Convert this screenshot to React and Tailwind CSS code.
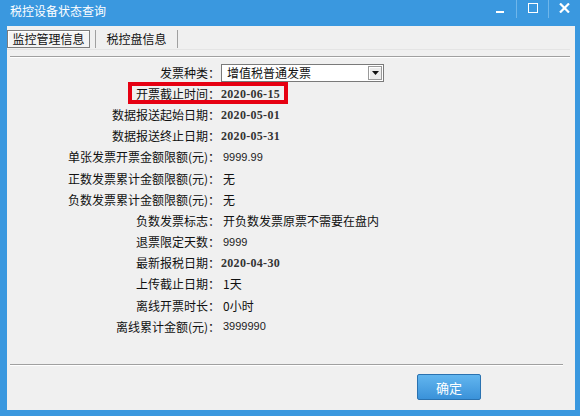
import React from "react";

const cjk = { fontFamily: '"Noto Sans CJK SC", "Noto Sans", sans-serif' };
const dateFont = { fontFamily: '"Liberation Serif", serif' };
const numFont = { fontFamily: '"Liberation Sans", Arial, sans-serif' };

function Row({ label, children, boxed }) {
  return (
    <div className="relative flex h-[21.2px] items-center">
      <div className="w-[213px] shrink-0 text-right text-[12px] leading-none text-[#111]" style={cjk}>
        {label}
      </div>
      <div className="flex items-center pl-[1px]">{children}</div>
      {boxed && (
        <div className="pointer-events-none absolute left-[121px] top-[-1px] h-[22px] w-[160px] border-[4px] border-[#e60012]" />
      )}
    </div>
  );
}

const DateVal = ({ v }) => (
  <span className="text-[12px] font-bold leading-none tracking-[0.3px] text-[#333]" style={dateFont}>
    {v}
  </span>
);
const NumVal = ({ v }) => (
  <span className="pl-[2px] text-[11px] leading-none text-[#222]" style={numFont}>
    {v}
  </span>
);
const CjkVal = ({ v }) => (
  <span className="pl-[2px] text-[12px] leading-none text-[#111]" style={cjk}>
    {v}
  </span>
);

export default function App() {
  return (
    <div className="flex h-[416px] w-[580px] flex-col overflow-hidden bg-[#3a98df]">
      {/* title bar */}
      <div className="relative flex h-[26px] shrink-0 items-start">
        <div className="pl-[10px] pt-[5px] text-[12px] leading-none text-white" style={cjk}>
          税控设备状态查询
        </div>
        <div className="ml-auto flex h-[18px] items-start">
          <div className="flex h-[18px] w-[33px] items-center justify-center">
            <div className="mt-[6px] h-[2px] w-[8px] bg-white" />
          </div>
          <div className="h-[18px] w-px bg-[#6fb6ea]" />
          <div className="flex h-[18px] w-[31px] items-start justify-center pt-[3px]">
            <div className="h-[10px] w-[10px] border-[1.5px] border-white" />
          </div>
          <div className="h-[18px] w-px bg-[#6fb6ea]" />
          <div className="flex h-[18px] w-[31px] items-start justify-center pt-[3px]">
            <svg width="11" height="10" viewBox="0 0 11 10">
              <path d="M1 0.5 L10 9.5 M10 0.5 L1 9.5" stroke="white" strokeWidth="2.2" />
            </svg>
          </div>
        </div>
      </div>

      {/* client area */}
      <div className="mb-[6px] ml-[7px] mr-[5px] flex flex-1 flex-col bg-[#f0f0f0]">
        {/* tabs */}
        <div className="mt-[4px] flex h-[18px] items-stretch">
          <div
            className="flex w-[83px] items-center justify-center border border-[#7d7d7d] bg-[#f4f4f4] text-[12px] leading-none text-[#111] shadow-[inset_1px_1px_0_#ffffff]"
            style={cjk}
          >
            监控管理信息
          </div>
          <div className="ml-[5px] w-px bg-[#a0a0a0]" />
          <div className="flex w-[81px] items-center justify-center text-[12px] leading-none text-[#111]" style={cjk}>
            税控盘信息
          </div>
          <div className="w-px bg-[#a0a0a0]" />
        </div>
        <div className="mt-px h-px w-[563px] bg-[#e4e4e4]" />

        {/* top etched line */}
        <div className="ml-[3px] mt-[6px] h-px w-[560px] bg-[#a0a0a0] shadow-[0_1px_0_#ffffff]" />

        {/* rows */}
        <div className="mt-[5px] flex flex-col">
          <Row label="发票种类：">
            <div className="flex h-[18px] w-[163px] items-center border border-[#7a7a7a] bg-white">
              <span className="pl-[5px] text-[12px] leading-none text-[#111]" style={cjk}>
                增值税普通发票
              </span>
              <div className="ml-auto mr-px flex h-[14px] w-[14px] items-center justify-center border border-[#9a9a9a] bg-[#ececec] shadow-[inset_1px_1px_0_#ffffff]">
                <svg width="7" height="4" viewBox="0 0 7 4">
                  <path d="M0 0 L7 0 L3.5 4 Z" fill="#111" />
                </svg>
              </div>
            </div>
          </Row>
          <Row label="开票截止时间：" boxed>
            <DateVal v="2020-06-15" />
          </Row>
          <Row label="数据报送起始日期：">
            <DateVal v="2020-05-01" />
          </Row>
          <Row label="数据报送终止日期：">
            <DateVal v="2020-05-31" />
          </Row>
          <Row label="单张发票开票金额限额(元)：">
            <NumVal v="9999.99" />
          </Row>
          <Row label="正数发票累计金额限额(元)：">
            <CjkVal v="无" />
          </Row>
          <Row label="负数发票累计金额限额(元)：">
            <CjkVal v="无" />
          </Row>
          <Row label="负数发票标志：">
            <CjkVal v="开负数发票原票不需要在盘内" />
          </Row>
          <Row label="退票限定天数：">
            <NumVal v="9999" />
          </Row>
          <Row label="最新报税日期：">
            <DateVal v="2020-04-30" />
          </Row>
          <Row label="上传截止日期：">
            <CjkVal v="1天" />
          </Row>
          <Row label="离线开票时长：">
            <CjkVal v="0小时" />
          </Row>
          <Row label="离线累计金额(元)：">
            <NumVal v="3999990" />
          </Row>
        </div>

        {/* bottom etched line */}
        <div className="ml-[3px] mt-[27px] h-px w-[553px] bg-[#a0a0a0] shadow-[0_1px_0_#ffffff]" />

        {/* button */}
        <div className="mt-[9px] flex pl-[410px]">
          <div
            className="flex h-[26px] w-[64px] items-center justify-center rounded-[2px] border border-[#2a72b0] bg-gradient-to-b from-[#62b6ef] to-[#3a92d9] text-[13px] leading-none text-white"
            style={cjk}
          >
            确定
          </div>
        </div>
      </div>
    </div>
  );
}
